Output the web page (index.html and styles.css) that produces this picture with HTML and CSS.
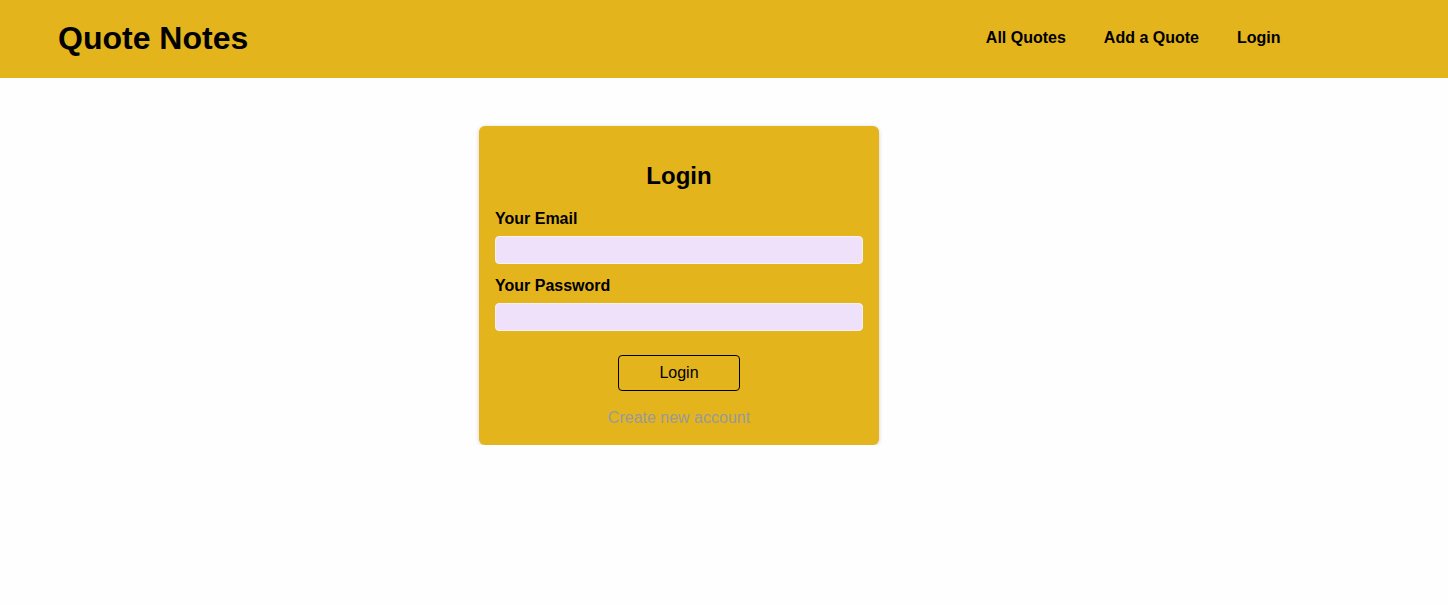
FILE: index.html
```html
<!DOCTYPE html>
<html lang="en">
<head>
<meta charset="utf-8">
<title>Quote Notes</title>
<link rel="stylesheet" href="styles.css">
</head>
<body>
<header class="header">
  <div class="logo">Quote Notes</div>
  <nav class="nav">
    <a class="nav-link" href="#">All Quotes</a>
    <a class="nav-link" href="#">Add a Quote</a>
    <a class="nav-link" href="#">Login</a>
  </nav>
</header>
<main class="main">
  <section class="auth">
    <h1 class="auth-title">Login</h1>
    <form class="auth-form">
      <div class="control">
        <label class="label" for="email">Your Email</label>
        <input class="input" type="email" id="email">
      </div>
      <div class="control">
        <label class="label" for="password">Your Password</label>
        <input class="input" type="password" id="password">
      </div>
      <div class="actions">
        <button class="btn" type="button">Login</button>
        <button class="toggle" type="button">Create new account</button>
      </div>
    </form>
  </section>
</main>
</body>
</html>
```
FILE: styles.css
```css
* { box-sizing: border-box; }
body {
  margin: 0;
  font-family: "Liberation Sans", Arial, sans-serif;
  background: #fefefe;
  color: #000;
}
.header {
  height: 78px;
  background: #e3b41c;
  display: flex;
  align-items: center;
  justify-content: space-between;
  padding: 0 167.5px 3px 58px;
}
.logo {
  font-size: 32px;
  font-weight: bold;
  line-height: 1;
  padding-top: 1px;
}
.nav {
  display: flex;
  gap: 38px;
}
.nav-link {
  color: #000;
  text-decoration: none;
  font-size: 16px;
  font-weight: bold;
}
.main {
  padding-top: 48px;
  padding-left: 479px;
}
.auth {
  width: 400px;
  background: #e3b41c;
  border-radius: 6px;
  padding: 16px 16px 15px;
  box-shadow: 0 1px 4px rgba(0,0,0,0.2);
  text-align: center;
}
.auth-title {
  font-size: 24px;
  margin: 20px 0 20px;
  line-height: 28px;
}
.control {
  text-align: left;
  margin-bottom: 13px;
}
.label {
  display: block;
  font-weight: bold;
  font-size: 16px;
  line-height: 18px;
  margin-bottom: 8px;
}
.input {
  display: block;
  width: 100%;
  height: 28px;
  border: 1px solid #f7f1f2;
  border-radius: 4px;
  background: #f0e1fa;
  font: inherit;
}
.actions {
  display: flex;
  flex-direction: column;
  align-items: center;
  padding-top: 11px;
}
.btn {
  width: 122px;
  height: 36px;
  background: transparent;
  border: 1px solid #000;
  border-radius: 4px;
  font-family: inherit;
  font-size: 16px;
  color: #000;
}
.toggle {
  margin-top: 15px;
  background: none;
  border: none;
  padding: 0;
  font-family: inherit;
  font-size: 16px;
  line-height: 24px;
  color: #9a9a9a;
}
```
